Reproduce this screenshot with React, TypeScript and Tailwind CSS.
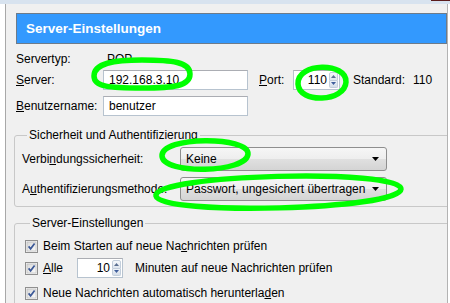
import React from "react";

function Spinner({ value, boxClass }: { value: string; boxClass: string }) {
  return (
    <div className={"flex h-[20px] border border-[#b7c3cf] border-t-[#abadb3] bg-white " + boxClass}>
      <div className="flex flex-1 items-center justify-end pr-[2px]">{value}</div>
      <div className="flex w-[10px] flex-col py-[1px] pr-[1px]">
        <div className="flex flex-1 items-center justify-center rounded-t-[2px] border border-[#c3cedb] bg-[linear-gradient(#f5f8fb,#dfe6ee)]">
          <svg width="5" height="3" viewBox="0 0 5 3">
            <path d="M0 3 L2.5 0 L5 3 Z" fill="#5b6f91" />
          </svg>
        </div>
        <div className="flex flex-1 items-center justify-center rounded-b-[2px] border border-t-0 border-[#c3cedb] bg-[linear-gradient(#eef2f7,#d5dee9)]">
          <svg width="5" height="3" viewBox="0 0 5 3">
            <path d="M0 0 L5 0 L2.5 3 Z" fill="#3f5e9c" />
          </svg>
        </div>
      </div>
    </div>
  );
}

function Dropdown({ text }: { text: string }) {
  return (
    <div className="flex h-[24px] w-[207px] items-center justify-between rounded-[3px] border border-[#8e8e8e] bg-[linear-gradient(#f6f6f6,#eeeeee_50%,#e0e0e0_50%,#d4d4d4)] pl-[5px] pr-[7px]">
      <span>{text}</span>
      <svg width="7" height="4" viewBox="0 0 7 4">
        <path d="M0 0 L7 0 L3.5 4 Z" fill="#000" />
      </svg>
    </div>
  );
}

function Check() {
  return (
    <svg width="13" height="13" viewBox="0 0 13 13" className="shrink-0">
      <defs>
        <linearGradient id="cbg" x1="0" y1="0" x2="1" y2="1">
          <stop offset="0" stopColor="#d8d8d8" />
          <stop offset="1" stopColor="#fbfbfb" />
        </linearGradient>
      </defs>
      <rect x="0.5" y="0.5" width="12" height="12" fill="#f4f4f4" stroke="#8f8f8f" />
      <rect x="2" y="2" width="9" height="9" fill="url(#cbg)" stroke="#b4b4b4" strokeWidth="0.6" />
      <path d="M3.6 6.4 L5.6 8.8 L9.6 3.6" fill="none" stroke="#3b5897" strokeWidth="1.7" />
    </svg>
  );
}

export default function App() {
  return (
    <div className="relative h-[303px] w-[450px] overflow-hidden bg-[#f0f0f0] font-['Liberation_Sans',Arial,sans-serif] text-[12px] leading-[14px] text-black">
      <div className="flex h-[4px]">
        <div className="flex-1 bg-[#d8e3ef]" />
        <div className="w-[19px] border-t border-[#5b1c1c] bg-[#d8e3ef]" />
      </div>
      <div className="flex h-[299px]">
        <div className="w-[6px] shrink-0 border-r border-[#a8a8a8] bg-white" />
        <div className="flex-1 overflow-hidden pl-[8px] pt-[9px]">
          <div className="ml-[2px] flex h-[31px] items-center border border-[#6d7b8a] bg-[#3399fe] pl-[9px] text-[13.5px] font-bold text-white">
            Server-Einstellungen
          </div>

          <div className="pl-[2px]">
            <div className="mt-[5px] flex h-[20px] items-center">
              <span className="w-[87px]">Servertyp:</span>
              <span className="ml-[4px]">POP</span>
            </div>
            <div className="mt-[1px] flex h-[20px] items-center">
              <span className="w-[87px]">
                <u>S</u>erver:
              </span>
              <div className="flex h-[20px] w-[145px] items-center border border-[#b7c3cf] border-t-[#abadb3] bg-white px-[5px]">
                192.168.3.10
              </div>
              <span className="ml-[11px] w-[34px]">
                <u>P</u>ort:
              </span>
              <Spinner value="110" boxClass="w-[47px]" />
              <span className="ml-[13px] w-[60px]">Standard:</span>
              <span>110</span>
            </div>
            <div className="mt-[6px] flex h-[20px] items-center">
              <span className="w-[87px]">
                <u>B</u>enutzername:
              </span>
              <div className="flex h-[20px] w-[145px] items-center border border-[#b7c3cf] border-t-[#abadb3] bg-white px-[5px]">
                benutzer
              </div>
            </div>
          </div>

          <fieldset className="mr-[-6px] mt-[12px] rounded-[3px] border border-[#c8c8c8] pb-[5px] pl-[7px]">
            <legend className="ml-[5px] px-[2px] leading-[14px]">Sicherheit und Authentifizierung</legend>
            <div className="mt-[5px] flex h-[24px] items-center">
              <span className="w-[158px]">
                Verbi<u>n</u>dungssicherheit:
              </span>
              <Dropdown text="Keine" />
            </div>
            <div className="mt-[6px] flex h-[24px] items-center">
              <span className="w-[158px]">
                A<u>u</u>thentifizierungsmethode:
              </span>
              <Dropdown text="Passwort, ungesichert übertragen" />
            </div>
          </fieldset>

          <fieldset className="mr-[-6px] mt-[9px] rounded-[3px] border border-[#c8c8c8] pb-[10px] pl-[10px]">
            <legend className="ml-[5px] px-[2px] leading-[14px]">Server-Einstellungen</legend>
            <div className="mt-[6px] flex h-[20px] items-center gap-[5px]">
              <Check />
              <span>
                Beim Starten auf neue Na<u>c</u>hrichten prüfen
              </span>
            </div>
            <div className="mt-[2px] flex h-[20px] items-center">
              <Check />
              <span className="ml-[5px] w-[34px]">
                <u>A</u>lle
              </span>
              <Spinner value="10" boxClass="w-[46px]" />
              <span className="ml-[12px]">Minuten auf neue Nachrichten prüfen</span>
            </div>
            <div className="mt-[5px] flex h-[20px] items-center gap-[5px]">
              <Check />
              <span>
                Neue Nachrichten automatisch herunterla<u>d</u>en
              </span>
            </div>
          </fieldset>
        </div>
        <div className="w-[3px] shrink-0 border-l border-[#b3b3b3] bg-white" />
      </div>

      {/* green hand-drawn markings over the form */}
      <svg className="pointer-events-none absolute left-0 top-0" width="450" height="303" viewBox="0 0 450 303">
        <g fill="none" stroke="#00ff00" strokeWidth="5.5" strokeLinejoin="round">
          <path d="M94 76 C94 63 114 60 142 60 C172 60 190 62 190 74 C190 86 174 88 142 88 C110 88 94 87 94 76 Z" />
          <path d="M298 84 C297 62 347 62 346 82 C345 102 299 104 298 84 Z" />
          <path d="M162 156 C161 136 249 136 248 154 C247 173 163 175 162 156 Z" />
          <path d="M156 196 C152 174 402 168 401 189 C400 210 160 216 156 196 Z" />
        </g>
      </svg>
    </div>
  );
}
